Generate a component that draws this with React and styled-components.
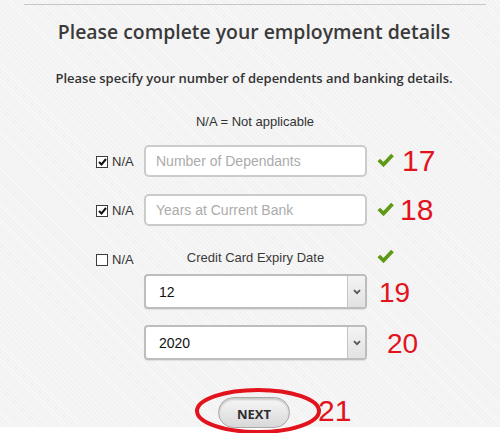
import React from 'react';
import styled, { createGlobalStyle } from 'styled-components';

const GlobalStyle = createGlobalStyle`
   html, body {
      margin: 0;
      padding: 0;
      background: #fff;
   }
`;

const App = () => {
   return (
      <Root>
         <GlobalStyle />
         <Page>
            <Rule />
            <Title>Please complete your employment details</Title>
            <Subtitle>Please specify your number of dependents and banking details.</Subtitle>
            <Note>N/A = Not applicable</Note>

            <FieldRow $top={15}>
               <NaLabel $drop={2}>
                  <Box $checked>{tick}</Box>N/A
               </NaLabel>
               <Input placeholder='Number of Dependants' />
               <Check>{greenCheck}</Check>
               <Marker $shift={-1}>17</Marker>
            </FieldRow>

            <FieldRow $top={17}>
               <NaLabel $drop={2}>
                  <Box $checked>{tick}</Box>N/A
               </NaLabel>
               <Input placeholder='Years at Current Bank' />
               <Check>{greenCheck}</Check>
               <Marker $shift={-3}>18</Marker>
            </FieldRow>

            <LabelRow>
               <NaLabel $drop={2}>
                  <Box>{null}</Box>N/A
               </NaLabel>
               <FieldCaption>Credit Card Expiry Date</FieldCaption>
               <Check $up>{greenCheck}</Check>
            </LabelRow>

            <SelectRow $top={8}>
               <SelectBox>
                  <Select defaultValue='12'>
                     <option>12</option>
                  </Select>
                  <Arrow>{chevron}</Arrow>
               </SelectBox>
               <SmallMarker $gap={12}>19</SmallMarker>
            </SelectRow>

            <SelectRow $top={16}>
               <SelectBox>
                  <Select defaultValue='2020'>
                     <option>2020</option>
                  </Select>
                  <Arrow>{chevron}</Arrow>
               </SelectBox>
               <SmallMarker $gap={20}>20</SmallMarker>
            </SelectRow>

            <ButtonRow>
               <NextButton>NEXT</NextButton>
               <Marker $shift={28} $lift={4}>21</Marker>
            </ButtonRow>
         </Page>

         {/* hand drawn highlight around the button */}
         <Circle width='132' height='50' viewBox='0 0 132 50'>
            <ellipse cx='65' cy='25' rx='61' ry='21' fill='none' stroke='#e2131d' strokeWidth='4' />
         </Circle>
      </Root>
   );
};

export default App;

const tick = (
   <svg width='9' height='8' viewBox='0 0 9 8'>
      <polyline points='1,4 3.5,6.5 8,1' fill='none' stroke='#111' strokeWidth='2' />
   </svg>
);

const greenCheck = (
   <svg width='17' height='14' viewBox='0 0 17 14'>
      <polyline points='1.8,7 6.5,11.5 15.5,2' fill='none' stroke='#5f9a17' strokeWidth='3.8' />
   </svg>
);

const chevron = (
   <svg width='8' height='6' viewBox='0 0 8 6'>
      <polyline points='1,1.2 4,4.2 7,1.2' fill='none' stroke='#555' strokeWidth='1.8' />
   </svg>
);

const Root = styled.div`
   position: relative;
   width: 500px;
   height: 433px;
   overflow: hidden;
`;

const Page = styled.div`
   height: 427px;
   padding-top: 4px;
   box-sizing: border-box;
   background-color: #f2f2f2;
   background-image: repeating-linear-gradient(
      45deg,
      rgba(255, 255, 255, 0.45) 0 1px,
      rgba(0, 0, 0, 0) 1px 3px
   );
`;

const Rule = styled.div`
   height: 1px;
   margin: 0 14px 0 24px;
   background: #c6c6c6;
`;

const Title = styled.h1`
   margin: 13px 0 0;
   font-family: 'Open Sans', sans-serif;
   font-weight: 600;
   font-size: 19.4px;
   line-height: 28px;
   color: #3a3a3a;
   text-align: center;
   padding-left: 8px;
`;

const Subtitle = styled.p`
   margin: 23px 0 0;
   font-family: 'Open Sans', sans-serif;
   font-weight: 600;
   font-size: 13px;
   line-height: 18px;
   color: #333;
   text-align: center;
   padding-left: 8px;
`;

const Note = styled.p`
   margin: 27px 0 0;
   font-family: 'Liberation Sans', Arial, sans-serif;
   font-size: 13px;
   line-height: 16px;
   color: #333;
   text-align: center;
   padding-left: 10px;
`;

const FieldRow = styled.div`
   display: grid;
   grid-template-columns: 48px 223px 36px auto;
   align-items: center;
   margin-top: ${(p) => p.$top}px;
   padding-left: 96px;
   height: 32px;
`;

const LabelRow = styled.div`
   display: grid;
   grid-template-columns: 48px 223px 36px;
   align-items: start;
   margin-top: 24px;
   padding-left: 96px;
   height: 16px;
`;

const SelectRow = styled.div`
   display: flex;
   align-items: center;
   margin-top: ${(p) => p.$top}px;
   padding-left: 144px;
`;

const NaLabel = styled.label`
   display: flex;
   align-items: center;
   gap: 4px;
   margin-top: ${(p) => p.$drop}px;
   font-family: 'Liberation Sans', Arial, sans-serif;
   font-size: 13px;
   line-height: 16px;
   color: #333;
`;

const Box = styled.span`
   display: flex;
   align-items: center;
   justify-content: center;
   width: 10px;
   height: 10px;
   border: 1px solid #3c3c3c;
   background: #fff;
`;

const Input = styled.input`
   box-sizing: border-box;
   width: 223px;
   height: 32px;
   padding: 0 10px;
   border: 2px solid #cbcbcb;
   border-radius: 5px;
   background: #fff;
   font-family: 'Liberation Sans', Arial, sans-serif;
   font-size: 14px;
   outline: none;

   &::placeholder {
      color: #ababab;
   }
`;

const Check = styled.span`
   display: flex;
   padding-left: 10px;
   margin-top: ${(p) => (p.$up ? '-1px' : '-3px')};
`;

const Marker = styled.span`
   margin-left: ${(p) => p.$shift}px;
   margin-top: ${(p) => -(p.$lift || 0)}px;
   font-family: 'Liberation Sans', Arial, sans-serif;
   font-size: 30px;
   line-height: 26px;
   color: #e1141d;
`;

const SmallMarker = styled.span`
   margin-left: ${(p) => p.$gap}px;
   margin-top: 2px;
   font-family: 'Liberation Sans', Arial, sans-serif;
   font-size: 28px;
   line-height: 32px;
   color: #e1141d;
`;

const FieldCaption = styled.span`
   text-align: center;
   font-family: 'Liberation Sans', Arial, sans-serif;
   font-size: 13px;
   line-height: 16px;
   color: #3a3a3a;
`;

const SelectBox = styled.div`
   display: flex;
   box-sizing: border-box;
   width: 223px;
   height: 35px;
   border: 2px solid #bdbdbd;
   border-radius: 4px;
   background: #fff;
   overflow: hidden;
   box-shadow: 0 1px 1px rgba(0, 0, 0, 0.08);
`;

const Select = styled.select`
   flex: 1;
   appearance: none;
   border: none;
   background: transparent;
   padding: 0 0 0 13px;
   font-family: 'Liberation Sans', Arial, sans-serif;
   font-size: 14px;
   color: #111;
   outline: none;
`;

const Arrow = styled.span`
   display: flex;
   align-items: center;
   justify-content: center;
   width: 17px;
   border-left: 1px solid #c4c4c4;
   background: linear-gradient(#f4f4f4, #e2e2e2);
`;

const ButtonRow = styled.div`
   display: flex;
   align-items: center;
   margin-top: 37px;
   padding-left: 218px;
`;

const NextButton = styled.button`
   box-sizing: border-box;
   width: 72px;
   height: 31px;
   border: 1px solid #a9a9a9;
   border-radius: 16px;
   background: linear-gradient(#f7f7f7, #d8d8d8);
   box-shadow: inset 0 2px 2px rgba(0, 0, 0, 0.18);
   font-family: 'Open Sans', sans-serif;
   font-weight: 700;
   font-size: 13px;
   color: #2e2e2e;
   padding: 2px 0 0;
`;

const Circle = styled.svg`
   position: absolute;
   left: 193px;
   top: 386px;
   pointer-events: none;
`;
